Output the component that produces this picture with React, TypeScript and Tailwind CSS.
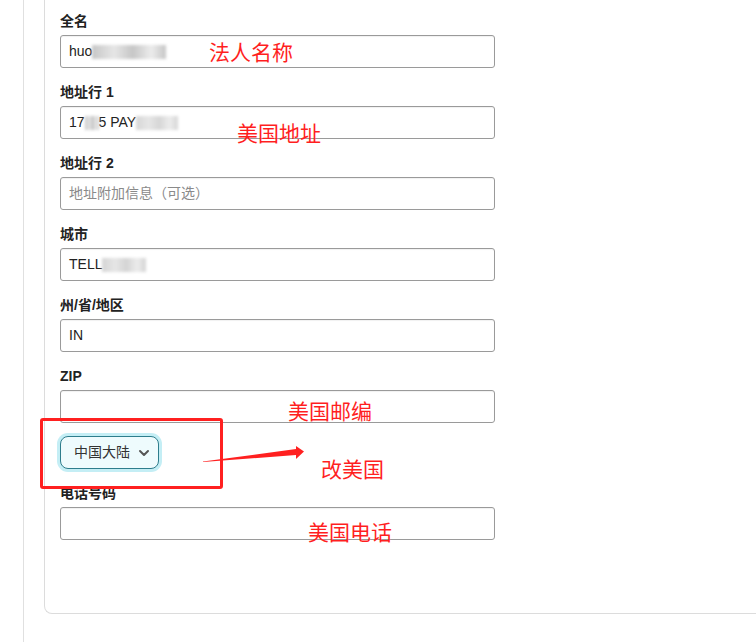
import React from "react";

const cjk = "font-['Liberation_Sans','Noto_Sans_CJK_SC',sans-serif]";

// mosaic blur used where the screenshot hid personal data
function Smudge({ width, shade = "#c8c8c8" }: { width: number; shade?: string }) {
  return (
    <span
      className="inline-block h-[14px] align-middle blur-[1.5px]"
      style={{
        width,
        background: `linear-gradient(90deg, ${shade} 0%, #e6e6e6 30%, ${shade} 55%, #ececec 80%, ${shade} 100%)`,
      }}
    />
  );
}

function Field({
  label,
  children,
  placeholder,
}: {
  label: string;
  children?: React.ReactNode;
  placeholder?: string;
}) {
  return (
    <div className="mb-[14px]">
      <div className="h-5 mb-1 text-[14px] leading-5 font-bold text-[#222]">{label}</div>
      <div className="h-[33px] w-[435px] rounded-[3px] border border-[#9a9a9a] bg-white px-[8px] flex items-center text-[14px] text-[#222] shadow-[inset_0_1px_1px_rgba(0,0,0,0.06)]">
        {children ?? <span className="text-[#8a8a8a]">{placeholder}</span>}
      </div>
    </div>
  );
}

function Note({ text, className }: { text: string; className: string }) {
  return (
    <span
      className={`absolute text-[21px] leading-none text-[#ff1f1f] font-['Noto_Sans_CJK_SC',sans-serif] whitespace-nowrap ${className}`}
    >
      {text}
    </span>
  );
}

export default function App() {
  return (
    <div className={`relative w-[756px] h-[642px] overflow-hidden bg-white ${cjk}`}>
      <div className="flex h-full">
        <div className="w-[24px] shrink-0 border-r border-[#e0e0e0]" />
        <div className="flex-1 pl-5 h-[614px]">
          <div className="h-full border-l border-b border-[#dcdcdc] rounded-bl-lg pl-[15px] pt-[11px]">
            <Field label="全名">
              <span>huo</span>
              <Smudge width={74} shade="#c6c6c6" />
            </Field>
            <Field label="地址行 1">
              <span>17</span>
              <Smudge width={14} shade="#c4c4c4" />
              <span>5 PAY</span>
              <Smudge width={42} shade="#d6d6d6" />
            </Field>
            <Field label="地址行 2" placeholder="地址附加信息（可选）" />
            <Field label="城市">
              <span>TELL</span>
              <Smudge width={44} shade="#d4d4d4" />
            </Field>
            <Field label="州/省/地区">
              <span>IN</span>
            </Field>
            <Field label="ZIP">
              <span />
            </Field>
            <div className="-mt-px mb-[14px]">
              <button className="h-[33px] w-[99px] rounded-lg border border-[#2e7d8c] bg-[#eefbfd] shadow-[0_0_0_3px_#c4eef5] flex items-center pl-[13px] gap-[8px] text-[14px] text-[#333]">
                <span>中国大陆</span>
                <svg width="12" height="12" viewBox="0 0 12 12" fill="none">
                  <path d="M2 4l4 4 4-4" stroke="#555" strokeWidth="2" strokeLinecap="round" strokeLinejoin="round" />
                </svg>
              </button>
            </div>
            <Field label="电话号码">
              <span />
            </Field>
          </div>
        </div>
      </div>

      {/* red annotations drawn over the form */}
      <div className="absolute left-[40px] top-[418px] w-[183px] h-[71px] border-[3px] border-[#ff2020] rounded-[3px]" />
      <svg className="absolute left-[200px] top-[440px]" width="110" height="26" viewBox="0 0 110 26">
        <polygon points="3,21.5 96,9 96,6 104,11.5 96,19 96,15 3,22" fill="#ff2020" />
      </svg>
      <Note text="法人名称" className="left-[209px] top-[41px]" />
      <Note text="美国地址" className="left-[237px] top-[122px]" />
      <Note text="美国邮编" className="left-[288px] top-[400px]" />
      <Note text="改美国" className="left-[321px] top-[458px]" />
      <Note text="美国电话" className="left-[308px] top-[521px]" />
    </div>
  );
}
